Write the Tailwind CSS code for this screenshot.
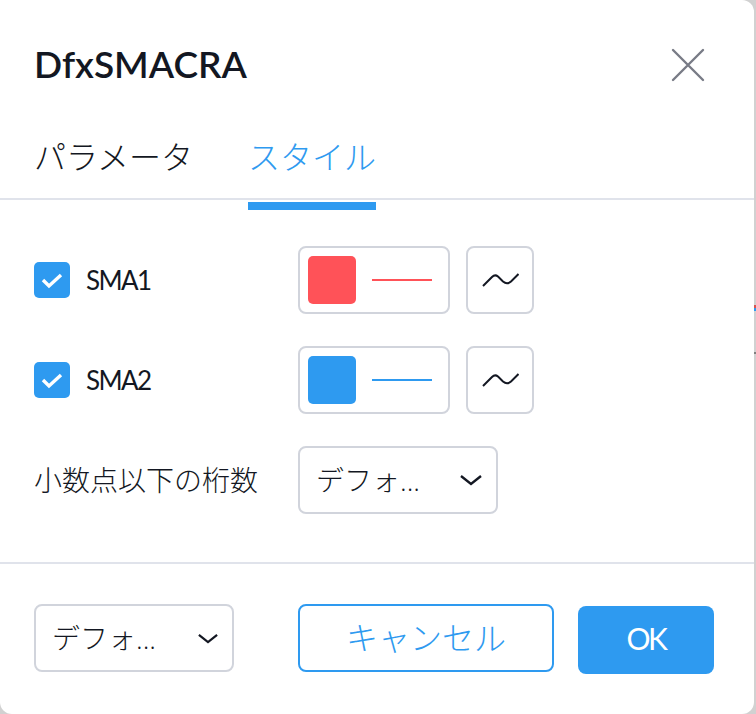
<!DOCTYPE html>
<html lang="ja">
  <head>
    <meta charset="utf-8">
    <script src="https://cdn.jsdelivr.net/npm/@tailwindcss/browser@4"></script>
  </head>
  <body class="bg-[#d1d1d1] font-['Open_Sans','Noto_Sans_CJK_JP',sans-serif]">
    <div class="flex">
      <div class="w-[754px] h-[714px] bg-white rounded-tr-xl rounded-b-xl flex flex-col text-[#131722]">
        <div class="h-[128px] px-[34px] pt-[41px] flex justify-between">
          <div class="text-[37px] leading-[46px] font-semibold font-['Lato','Noto_Sans_CJK_JP',sans-serif]">DfxSMACRA</div>
          <svg class="w-[36px] h-[36px] mr-[14px] mt-[6px]" viewBox="0 0 36 36" fill="none" stroke="#787b86" stroke-width="2.4" stroke-linecap="round"><path d="M3 3l30 30M33 3L3 33"/></svg>
        </div>
        <div class="h-[72px] px-[34px] flex gap-[55px] border-b-2 border-[#e0e3eb]">
          <div class="text-[32px] leading-[58px] font-light">パラメータ</div>
          <div class="text-[32px] leading-[58px] font-light text-[#2e9af0]">スタイル</div>
        </div>
        <div class="h-[12px] pt-[2px] px-[248px]"><div class="w-[128px] h-[8px] bg-[#2e9af0]"></div></div>
        <div class="h-[352px] px-[34px] pt-[34px] flex flex-col gap-[32px] border-b-2 border-[#e0e3eb]">
          <div class="flex items-center h-[68px]">
            <div class="w-[264px] flex items-center gap-[16px]">
              <div class="w-[36px] h-[36px] bg-[#2e9af0] rounded-[5px] flex items-center justify-center">
                <svg class="w-[22px] h-[22px]" viewBox="0 0 22 22" fill="none" stroke="#fff" stroke-width="3.4"><path d="M2 11l6 6L20 6"/></svg>
              </div>
              <span class="text-[26px] tracking-[-1.600px] font-['Lato',sans-serif]">SMA1</span>
            </div>
            <div class="w-[152px] h-[68px] border-2 border-[#d1d4dc] rounded-lg flex items-center pl-[8px] gap-[16px]">
              <div class="w-[48px] h-[48px] bg-[#ff5258] rounded-[5px]"></div>
              <div class="w-[60px] h-[2px] bg-[#ff5258]"></div>
            </div>
            <div class="w-[68px] h-[68px] ml-[16px] border-2 border-[#d1d4dc] rounded-lg flex items-center justify-center">
              <svg class="w-[38px] h-[16px]" viewBox="0 0 38 16" fill="none" stroke="#131722" stroke-width="2"><path d="M2 14L11 5Q14 2 17 4.500L22 9.500Q26 13 30 9.500L37.500 2"/></svg>
            </div>
          </div>
          <div class="flex items-center h-[68px]">
            <div class="w-[264px] flex items-center gap-[16px]">
              <div class="w-[36px] h-[36px] bg-[#2e9af0] rounded-[5px] flex items-center justify-center">
                <svg class="w-[22px] h-[22px]" viewBox="0 0 22 22" fill="none" stroke="#fff" stroke-width="3.4"><path d="M2 11l6 6L20 6"/></svg>
              </div>
              <span class="text-[26px] tracking-[-1.600px] font-['Lato',sans-serif]">SMA2</span>
            </div>
            <div class="w-[152px] h-[68px] border-2 border-[#d1d4dc] rounded-lg flex items-center pl-[8px] gap-[16px]">
              <div class="w-[48px] h-[48px] bg-[#2e9af0] rounded-[5px]"></div>
              <div class="w-[60px] h-[2px] bg-[#2e9af0]"></div>
            </div>
            <div class="w-[68px] h-[68px] ml-[16px] border-2 border-[#d1d4dc] rounded-lg flex items-center justify-center">
              <svg class="w-[38px] h-[16px]" viewBox="0 0 38 16" fill="none" stroke="#131722" stroke-width="2"><path d="M2 14L11 5Q14 2 17 4.500L22 9.500Q26 13 30 9.500L37.500 2"/></svg>
            </div>
          </div>
          <div class="flex items-center h-[68px]">
            <div class="w-[264px] text-[28px] font-light">小数点以下の桁数</div>
            <div class="w-[200px] h-[68px] border-2 border-[#d1d4dc] rounded-lg flex items-center justify-between pl-[16px] pr-[14px]">
              <span class="text-[28px] font-light">デフォ...</span>
              <svg class="w-[22px] h-[12px]" viewBox="0 0 22 12" fill="none" stroke="#131722" stroke-width="2.4"><path d="M1 2l10 8 10-8"/></svg>
            </div>
          </div>
        </div>
        <div class="flex items-start px-[34px] pt-[40px]">
          <div class="w-[200px] h-[68px] border-2 border-[#d1d4dc] rounded-lg flex items-center justify-between pl-[16px] pr-[14px]">
            <span class="text-[28px] font-light">デフォ...</span>
            <svg class="w-[20px] h-[11px]" viewBox="0 0 22 12" fill="none" stroke="#131722" stroke-width="2.4"><path d="M1 2l10 8 10-8"/></svg>
          </div>
          <div class="w-[256px] h-[68px] ml-[64px] border-2 border-[#2e9af0] rounded-lg flex items-center justify-center text-[32px] font-light text-[#2e9af0]">キャンセル</div>
          <div class="w-[136px] h-[68px] ml-[24px] mt-[2px] pb-[4px] bg-[#2e9af0] rounded-lg flex items-center justify-center text-[30px] tracking-[-2.500px] text-white font-['Lato',sans-serif]">OK</div>
        </div>
      </div>
      <div class="w-[2px] pt-[305px]">
        <div class="h-[3px] bg-[#d9534f]"></div>
        <div class="h-[3px] bg-[#2e9af0]"></div>
        <div class="h-[2px] mt-[41px] bg-[#808080]"></div>
      </div>
    </div>
  </body>
</html>
